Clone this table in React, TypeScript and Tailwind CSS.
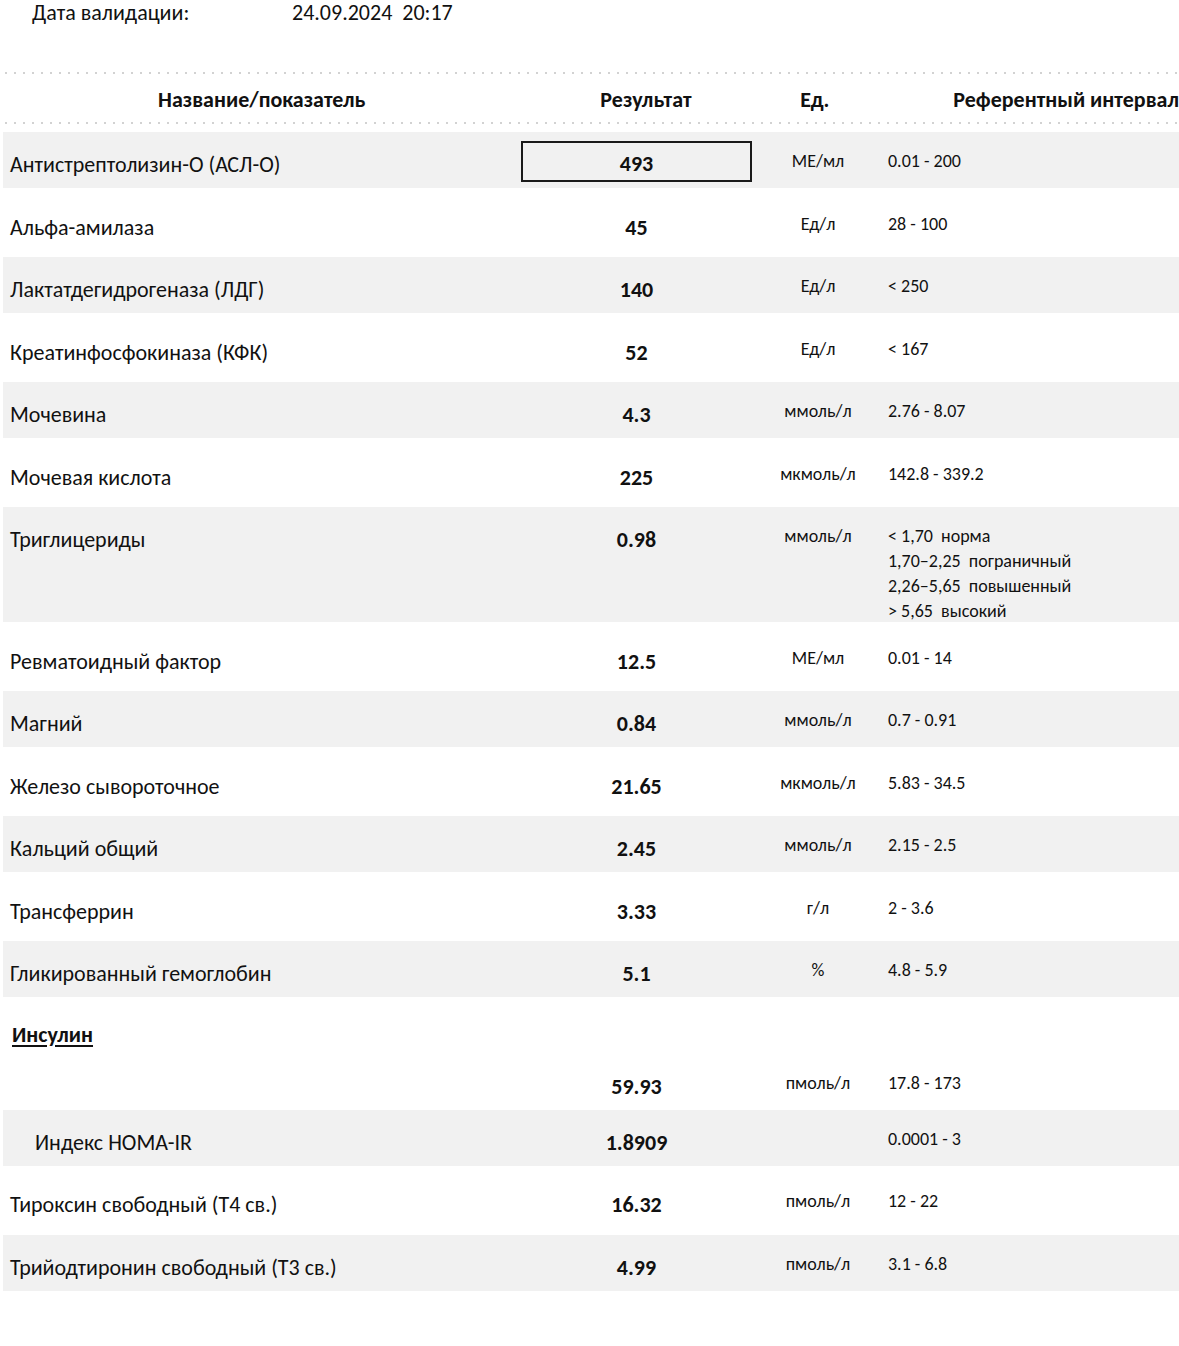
type Row = {
  name?: string;
  result?: string;
  unit?: string;
  ref?: string[];
  shaded?: boolean;
  boxed?: boolean;
  indent?: boolean;
  tall?: boolean;
};

const rows: Row[] = [
  { name: "Антистрептолизин-О (АСЛ-О)", result: "493", unit: "МЕ/мл", ref: ["0.01 - 200"], shaded: true, boxed: true },
  { name: "Альфа-амилаза", result: "45", unit: "Ед/л", ref: ["28 - 100"] },
  { name: "Лактатдегидрогеназа (ЛДГ)", result: "140", unit: "Ед/л", ref: ["< 250"], shaded: true },
  { name: "Креатинфосфокиназа (КФК)", result: "52", unit: "Ед/л", ref: ["< 167"] },
  { name: "Мочевина", result: "4.3", unit: "ммоль/л", ref: ["2.76 - 8.07"], shaded: true },
  { name: "Мочевая кислота", result: "225", unit: "мкмоль/л", ref: ["142.8 - 339.2"] },
  {
    name: "Триглицериды",
    result: "0.98",
    unit: "ммоль/л",
    ref: ["< 1,70  норма", "1,70–2,25  пограничный", "2,26–5,65  повышенный", "> 5,65  высокий"],
    shaded: true,
    tall: true,
  },
  { name: "Ревматоидный фактор", result: "12.5", unit: "МЕ/мл", ref: ["0.01 - 14"] },
  { name: "Магний", result: "0.84", unit: "ммоль/л", ref: ["0.7 - 0.91"], shaded: true },
  { name: "Железо сывороточное", result: "21.65", unit: "мкмоль/л", ref: ["5.83 - 34.5"] },
  { name: "Кальций общий", result: "2.45", unit: "ммоль/л", ref: ["2.15 - 2.5"], shaded: true },
  { name: "Трансферрин", result: "3.33", unit: "г/л", ref: ["2 - 3.6"] },
  { name: "Гликированный гемоглобин", result: "5.1", unit: "%", ref: ["4.8 - 5.9"], shaded: true },
];

const thyroid: Row[] = [
  { name: "Тироксин свободный (Т4 св.)", result: "16.32", unit: "пмоль/л", ref: ["12 - 22"] },
  { name: "Трийодтиронин свободный (Т3 св.)", result: "4.99", unit: "пмоль/л", ref: ["3.1 - 6.8"], shaded: true },
];

function Dots() {
  return (
    <div className="ml-[5px] h-[2px] bg-[linear-gradient(to_right,#d2d2d2_2px,transparent_2px)] bg-[length:9px_2px] bg-repeat-x" />
  );
}

function ResultRow({ row }: { row: Row }) {
  return (
    <div
      className={`ml-[3px] mb-[6.5px] flex ${row.tall ? "h-[115px]" : "h-[56px]"} ${
        row.shaded ? "bg-[#f1f1f1]" : ""
      }`}
    >
      <div
        className={`w-[518px] pt-[20px] text-[22px] leading-[26px] whitespace-nowrap ${
          row.indent ? "pl-[32px]" : "pl-[7px]"
        }`}
      >
        {row.name}
      </div>
      <div className="w-[231px]">
        {row.boxed ? (
          <div className="mt-[9px] h-[41px] pt-[3px] flex items-center justify-center border-2 border-[#1a1a1a] text-[22px] font-bold">
            {row.result}
          </div>
        ) : (
          <div className="pt-[20px] text-center text-[22px] leading-[26px] font-bold">{row.result}</div>
        )}
      </div>
      <div className="w-[132px] pt-[17px] text-center text-[18px] leading-[25px]">{row.unit}</div>
      <div className="pt-[17px] pl-[4px] text-[18px] leading-[25px]">
        {row.ref?.map((r) => (
          <div key={r} className="whitespace-pre">
            {r}
          </div>
        ))}
      </div>
    </div>
  );
}

export default function App() {
  return (
    <div className="w-[1179px] h-[1346px] overflow-hidden bg-white text-[#111] font-['Carlito','Calibri','Noto_Sans',sans-serif]">
      <div className="flex h-[24px] items-center text-[22px]">
        <span className="pl-[32px] w-[292px]">Дата валидации:</span>
        <span className="whitespace-pre">24.09.2024  20:17</span>
      </div>

      <div className="mt-[48px]">
        <Dots />
      </div>
      <div className="flex h-[48px] pt-[3px] items-center text-[22px] font-bold whitespace-nowrap">
        <div className="w-[524px] text-center">Название/показатель</div>
        <div className="w-[245px] text-center">Результат</div>
        <div className="w-[93px] text-center">Ед.</div>
        <div className="pl-[92px]">Референтный интервал</div>
      </div>
      <Dots />

      <div className="mt-[8px]">
        {rows.map((r) => (
          <ResultRow key={r.name} row={r} />
        ))}

        <div className="h-[50px] pl-[12px] pt-[18px] text-[22px] leading-[26px] font-bold underline underline-offset-[3px]">
          Инсулин
        </div>
        <div className="ml-[3px] flex h-[56px]">
          <div className="w-[518px]" />
          <div className="w-[231px] pt-[20px] text-center text-[22px] font-bold leading-[26px]">59.93</div>
          <div className="w-[132px] pt-[17px] text-center text-[18px] leading-[25px]">пмоль/л</div>
          <div className="pt-[17px] pl-[4px] text-[18px] leading-[25px]">17.8 - 173</div>
        </div>
        <ResultRow row={{ name: "Индекс HOMA-IR", result: "1.8909", ref: ["0.0001 - 3"], shaded: true, indent: true }} />
        {thyroid.map((r) => (
          <ResultRow key={r.name} row={r} />
        ))}
      </div>
    </div>
  );
}
